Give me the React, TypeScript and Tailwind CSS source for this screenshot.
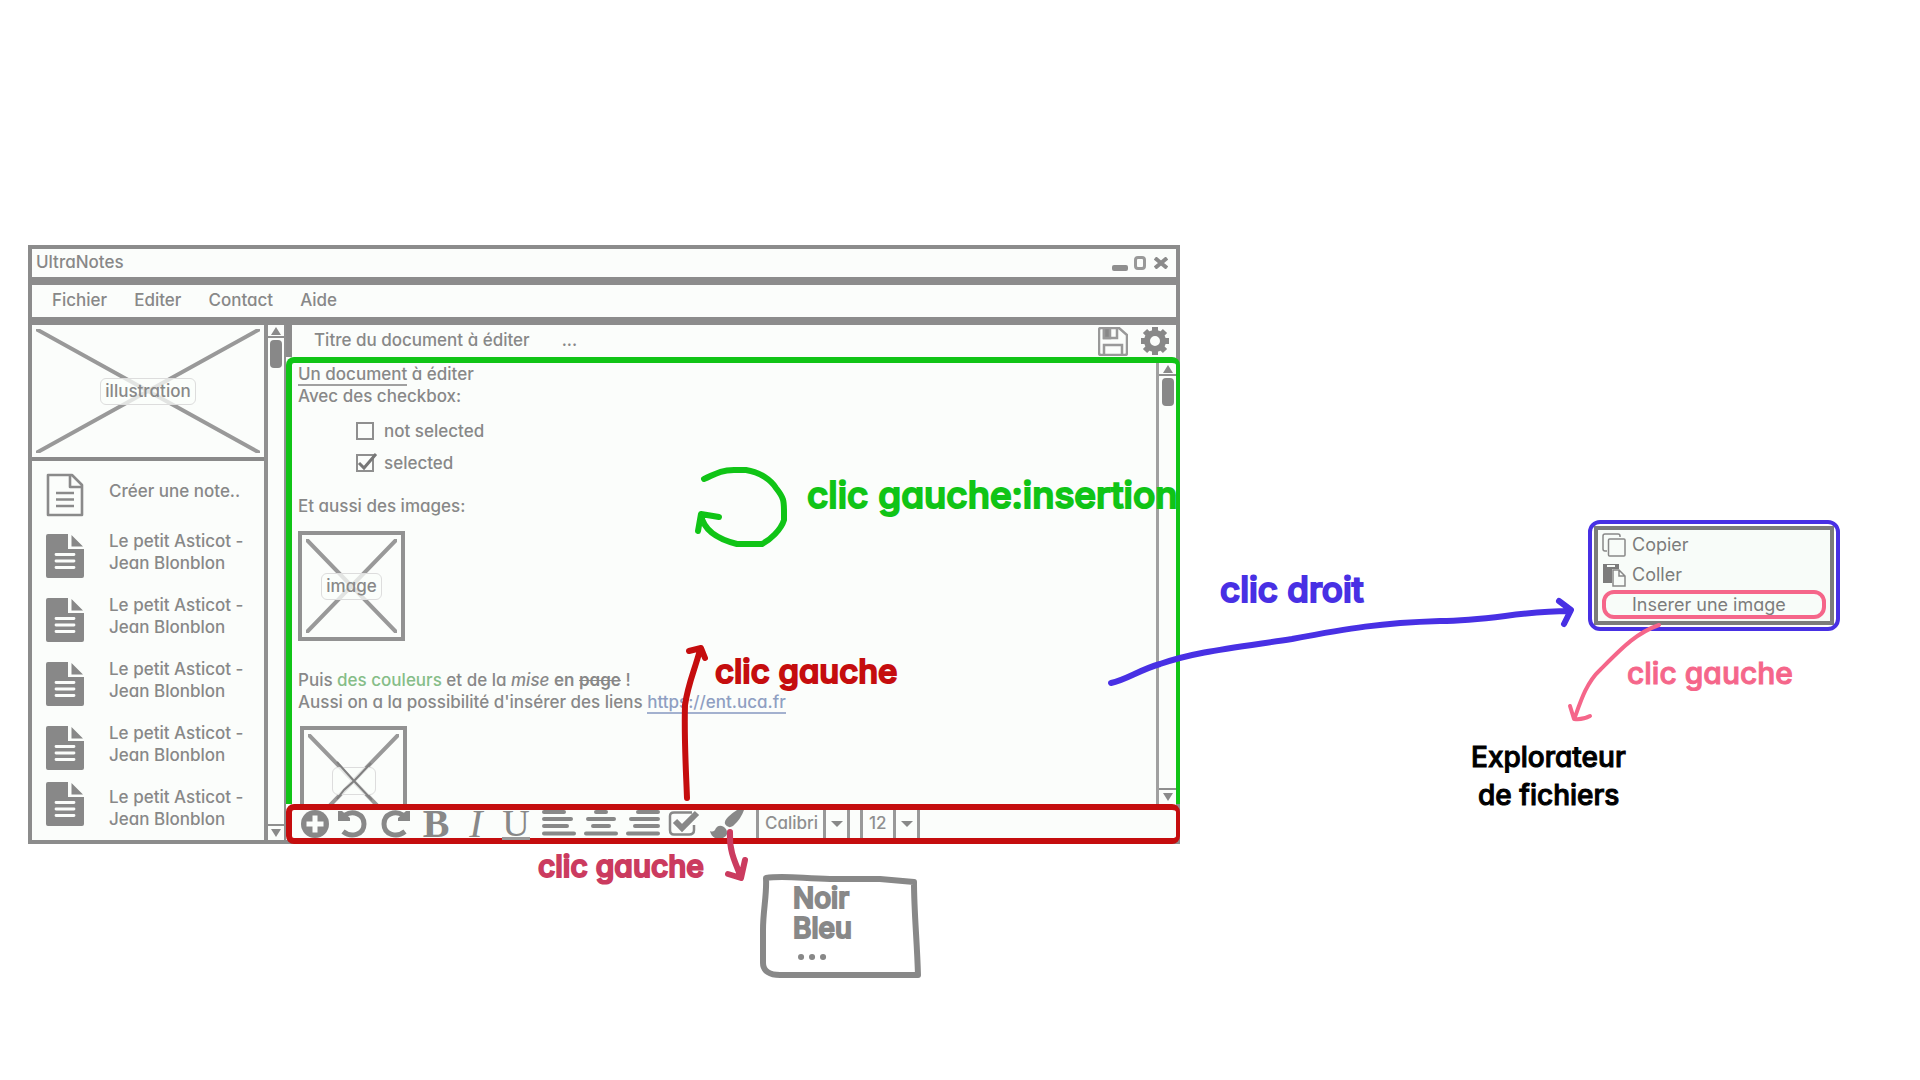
import type { ReactNode } from "react";

const notes = [1, 2, 3, 4, 5];

function Triangle({ down = false }: { down?: boolean }) {
  return (
    <svg viewBox="0 0 12 10" className="h-2.5 w-3" fill="#8a8a8a" aria-hidden="true">
      <path d={down ? "M1 1h10L6 9z" : "M1 9h10L6 1z"} />
    </svg>
  );
}

function ScrollBar({ className }: { className: string }) {
  return (
    <div className={`flex shrink-0 flex-col items-center ${className}`}>
      <button aria-label="Défiler vers le haut" className="flex h-[13px] w-full items-center justify-center border-b-2 border-[#8f8f8f]">
        <Triangle />
      </button>
      <div className="mt-0.5 h-7 w-3 rounded-sm bg-[#888888]" />
      <div className="flex-1" />
      <button aria-label="Défiler vers le bas" className="flex h-4 w-full items-center justify-center border-t-2 border-[#8f8f8f]">
        <Triangle down />
      </button>
    </div>
  );
}

function Placeholder({ label, className }: { label?: string; className: string }) {
  return (
    <div className={`relative flex items-center justify-center ${className}`}>
      <svg className="absolute inset-0 h-full w-full p-1" viewBox="0 0 100 100" preserveAspectRatio="none" aria-hidden="true">
        <path d="M0 0L100 100M100 0L0 100" stroke="#999999" strokeWidth="4" vectorEffect="non-scaling-stroke" />
      </svg>
      {label ? (
        <span className="relative rounded-md border border-[#dddddd] bg-[#fbfdfb]/75 px-1 leading-[25px]">{label}</span>
      ) : (
        <span className="relative flex h-7 w-11 items-center justify-center rounded-md border border-[#dddddd] bg-[#fbfdfb]/75">
          <svg viewBox="0 0 44 44" className="absolute h-11 w-11" fill="none" stroke="#808080" strokeWidth="2" aria-hidden="true">
            <path d="M5 3L22 22L40 41M39 4L22 22L12 31L5 40" />
          </svg>
        </span>
      )}
    </div>
  );
}

function NoteIcon({ outline = false }: { outline?: boolean }) {
  return (
    <svg viewBox="0 0 38 44" className="h-11 w-[38px]" aria-hidden="true">
      {outline ? (
        <g fill="none" stroke="#8a8a8a" strokeWidth="2.6" strokeLinejoin="round">
          <path d="M2 2H26L36 12V42H2zM24 2V14H36" />
          <path d="M10 20H28M10 26.500H28M10 33H28" />
        </g>
      ) : (
        <g>
          <path d="M2 0H22V15H38V42Q38 44 36 44H2Q0 44 0 42V2Q0 0 2 0zM25.500 1L37 12.500H25.500z" fill="#888888" />
          <path d="M10 20.500H28M10 27H28M10 33.500H28" stroke="#fbfdfb" strokeWidth="2.8" strokeLinecap="round" />
        </g>
      )}
    </svg>
  );
}

function ToolButton({ label, className, children }: { label: string; className: string; children: ReactNode }) {
  return (
    <button aria-label={label} className={`flex h-7 shrink-0 items-center justify-center ${className}`}>
      {children}
    </button>
  );
}

function Align({ d }: { d: string }) {
  return (
    <svg viewBox="0 0 34 28" className="h-7 w-[34px]" stroke="#888888" strokeWidth="4" strokeLinecap="round" aria-hidden="true">
      <path d={d} />
    </svg>
  );
}

function Picker({ label, value, className, tail }: { label: string; value: string; className: string; tail: string }) {
  return (
    <label className={`relative flex h-7 shrink-0 border-x-3 border-[#999999] ${className}`}>
      <select aria-label={label} className="w-full appearance-none bg-transparent pl-1.5 text-[#8f8f8f] outline-none">
        <option>{value}</option>
      </select>
      <span className={`pointer-events-none absolute inset-y-0 right-0 flex items-center justify-center border-l-3 border-[#999999] ${tail}`}>
        <svg viewBox="0 0 12 8" className="h-2 w-3" fill="#888888" aria-hidden="true">
          <path d="M0 1H12L6 7z" />
        </svg>
      </span>
    </label>
  );
}

function Sidebar() {
  return (
    <aside className="w-[236px] shrink-0 border-r-4 border-[#909090]">
      <Placeholder label="illustration" className="h-[136px] border-b-4 border-[#8a8a8a]" />
      <ul className="leading-[22px]">
        <li className="flex h-[59px] items-center pl-3.5">
          <span className="mt-2">
            <NoteIcon outline />
          </span>
          <button className="ml-[25px]">Créer une note..</button>
        </li>
        {notes.map((n) => (
          <li key={n} className="flex h-16 items-center pl-3.5">
            <span className={n === 5 ? "mb-2" : "mt-2"}>
              <NoteIcon />
            </span>
            <button className="ml-[25px] text-left">
              Le petit Asticot -
              <br />
              Jean Blonblon
            </button>
          </li>
        ))}
      </ul>
    </aside>
  );
}

function Editor() {
  return (
    <section className="flex flex-1 rounded-t-lg border-x-6 border-t-6 border-r-4 border-[#10c416] bg-[#fbfdfb]">
      <article className="min-w-0 flex-1 pl-1.5 leading-[22px]">
        <p>
          <span className="border-b-2 border-[#a0a0a0]">Un document</span> à éditer
        </p>
        <p>Avec des checkbox:</p>
        <div className="mt-2 pl-[58px]">
          <label className="flex h-8 items-center gap-2.5">
            <input type="checkbox" className="size-[18px] appearance-none border-2 border-[#8f8f8f]" />
            not selected
          </label>
          <label className="relative flex h-8 items-center gap-2.5">
            <input type="checkbox" defaultChecked className="size-[18px] appearance-none border-2 border-[#8f8f8f]" />
            <svg viewBox="0 0 22 20" className="pointer-events-none absolute left-0 h-5 w-[22px]" fill="none" stroke="#777777" strokeWidth="3" aria-hidden="true">
              <path d="M3 10L8 15L20 1" />
            </svg>
            selected
          </label>
        </div>
        <p className="mt-4">Et aussi des images:</p>
        <Placeholder label="image" className="mt-3.5 h-[110px] w-[107px] border-4 border-[#929292]" />
        <p className="mt-7">
          Puis <span className="text-[#86bd88]">des couleurs</span> et de la <em>mise</em> <strong className="font-semibold">en</strong>{" "}
          <s className="font-semibold">page</s> !
        </p>
        <p>
          Aussi on a la possibilité d'insérer des liens{" "}
          <a href="https://ent.uca.fr" className="border-b-2 border-[#a3b1cf] text-[#8f9fc2]">
            https://ent.uca.fr
          </a>
        </p>
        <div className="mt-[13px] ml-0.5 h-[78px] overflow-hidden">
          <Placeholder className="h-[110px] w-[107px] border-4 border-[#929292]" />
        </div>
      </article>
      <ScrollBar className="w-5 border-l-3 border-[#a0a0a0]" />
    </section>
  );
}

function Toolbar() {
  return (
    <div role="toolbar" className="flex h-10 items-center rounded-lg border-6 border-r-4 border-[#c50d0e] bg-[#fbfdfb] pl-2 text-[#888888]">
      <ToolButton label="Ajouter" className="w-[30px]">
        <svg viewBox="0 0 30 28" className="h-7 w-[30px]" aria-hidden="true">
          <circle cx="15" cy="14" r="14" fill="#888888" />
          <path d="M15 5.500V22.500M6.500 14H23.500" stroke="#fbfdfb" strokeWidth="5" />
        </svg>
      </ToolButton>
      <ToolButton label="Annuler" className="ml-2 w-[30px]">
        <svg viewBox="0 0 30 28" className="h-7 w-[30px]" aria-hidden="true">
          <path d="M7 5C15 0 26 4 26 14C26 25 13 28 5 21.500" fill="none" stroke="#888888" strokeWidth="5" />
          <path d="M0 1V11H12V8L4 1z" fill="#888888" />
        </svg>
      </ToolButton>
      <ToolButton label="Rétablir" className="ml-3 w-[30px]">
        <svg viewBox="0 0 30 28" className="h-7 w-[30px]" aria-hidden="true">
          <path d="M23 5C15 0 4 4 4 14C4 25 17 28 25 21.500" fill="none" stroke="#888888" strokeWidth="5" />
          <path d="M30 1V11H18V8L26 1z" fill="#888888" />
        </svg>
      </ToolButton>
      <ToolButton label="Gras" className="ml-3 w-7">
        <span className="font-['Liberation_Serif'] text-[40px] leading-10 font-bold">B</span>
      </ToolButton>
      <ToolButton label="Italique" className="ml-3.5 w-6">
        <span className="font-['Liberation_Serif'] text-[40px] leading-10 italic">I</span>
      </ToolButton>
      <ToolButton label="Souligné" className="ml-3.5 w-7">
        <span className="border-b-3 border-[#999999] font-['Liberation_Serif'] text-[38px] leading-7">U</span>
      </ToolButton>
      <ToolButton label="Aligner à gauche" className="ml-3 w-[34px]">
        <Align d="M2 2H22M2 9H29M2 16H25M2 23.500H32" />
      </ToolButton>
      <ToolButton label="Centrer" className="ml-2 w-[34px]">
        <Align d="M12 2H22M4 9H30M9 16H25M2 23.500H32" />
      </ToolButton>
      <ToolButton label="Aligner à droite" className="ml-2 w-[34px]">
        <Align d="M12 2H32M5 9H32M9 16H32M2 23.500H32" />
      </ToolButton>
      <ToolButton label="Case à cocher" className="ml-2 w-8">
        <svg viewBox="0 0 32 28" className="h-7 w-8" fill="none" stroke="#888888" aria-hidden="true">
          <path d="M24 2.500H6Q2 2.500 2 6V20Q2 24.500 6 24.500H21Q26 24.500 26 20V15" strokeWidth="2.500" />
          <path d="M7 11L14 18L29 3" strokeWidth="6" />
        </svg>
      </ToolButton>
      <ToolButton label="Couleur" className="ml-2.5 w-[34px]">
        <svg viewBox="0 0 34 28" className="h-7 w-[34px]" fill="#888888" aria-hidden="true">
          <path d="M27 0H34Q31 9 23 16Q18 19 15 14Q14 11 18 7Q22 3 27 0z" />
          <path d="M0 21Q4 23 6 18Q9 14 14 17Q19 21 16 26L13 28H5Q1 26 0 21z" />
        </svg>
      </ToolButton>
      <Picker label="Police" value="Calibri" className="ml-3 w-[94px]" tail="w-6" />
      <Picker label="Taille" value="12" className="ml-2.5 w-[60px]" tail="w-6" />
    </div>
  );
}

function AppWindow() {
  return (
    <div className="ml-7 w-3/5 bg-[#fbfdfb]">
      <header className="flex h-9 items-center justify-between border-4 border-[#8c8c8c] pr-2 pl-1">
        <h1>UltraNotes</h1>
        <div className="flex items-center gap-1.5">
          <button aria-label="Réduire" className="mt-2.5 h-1.5 w-4 rounded-xs bg-[#8f8f8f]" />
          <button aria-label="Agrandir" className="h-3.5 w-3 rounded-sm border-3 border-[#999999]" />
          <button aria-label="Fermer" className="ml-0.5">
            <svg viewBox="0 0 14 12" className="h-3 w-3.5" stroke="#8a8a8a" strokeWidth="4" aria-hidden="true">
              <path d="M1 1L13 11M13 1L1 11" />
            </svg>
          </button>
        </div>
      </header>
      <nav className="flex h-10 items-center gap-[27px] border-4 border-[#8c8c8c] pl-5">
        <button>Fichier</button>
        <button>Editer</button>
        <button>Contact</button>
        <button>Aide</button>
      </nav>
      <div className="flex border-4 border-[#8c8c8c]">
        <Sidebar />
        <ScrollBar className="w-[18px] border-r-2 border-[#909090]" />
        <main className="-mr-1 -mb-1 flex min-w-0 flex-1 flex-col">
          <div className="flex h-8 items-center border-r-4 border-l-6 border-[#8c8c8c] pr-1.5 pl-[22px]">
            <h2>Titre du document à éditer</h2>
            <span className="ml-8">...</span>
            <button aria-label="Enregistrer" className="ml-auto">
              <svg viewBox="0 0 30 29" className="h-[29px] w-[30px]" fill="none" stroke="#999999" strokeWidth="2.500" aria-hidden="true">
                <path d="M3 1H21L29 8V26Q29 28 27 28H3Q1 28 1 26V3Q1 1 3 1z" />
                <path d="M6 28V18H24V28M6 1V11H19V1" />
                <path d="M6 1H12V11H6z" fill="#888888" />
              </svg>
            </button>
            <button aria-label="Paramètres" className="ml-3">
              <svg viewBox="-15 -15 30 30" className="size-[30px]" aria-hidden="true">
                <circle r="8" fill="none" stroke="#888888" strokeWidth="6" />
                <path d="M0-14V-9M0 14V9M-14 0H-9M14 0H9M-10-10L-7-7M10 10L7 7M10-10L7-7M-10 10L-7 7" stroke="#888888" strokeWidth="6" />
              </svg>
            </button>
          </div>
          <Editor />
          <Toolbar />
        </main>
      </div>
    </div>
  );
}

function ContextMenu() {
  return (
    <div className="absolute top-[520px] left-[1588px] rounded-xl border-4 border-[#4830e4] bg-white p-0.5 text-lg font-normal text-[#7c7c7c]">
      <ul className="w-60 border-4 border-[#7c7c7c] bg-[#f8fcf9]">
        <li className="pl-1">
          <button className="flex h-[30px] items-center gap-1.5">
            <svg viewBox="0 0 24 24" className="size-6" fill="none" stroke="#888888" strokeWidth="1.500" aria-hidden="true">
              <path d="M5 18H3Q1 18 1 16V3Q1 1 3 1H16Q18 1 18 3V4" />
              <rect x="6.500" y="6" width="16.500" height="17" rx="1" />
            </svg>
            Copier
          </button>
        </li>
        <li className="pl-1">
          <button className="flex h-[30px] items-center gap-1.5">
            <svg viewBox="0 0 24 24" className="size-6" aria-hidden="true">
              <path d="M1 1H17V6H10V20H1z" fill="#7c7c7c" />
              <path d="M5 3H13" stroke="#f8fcf9" strokeWidth="2" />
              <path d="M11 7H17L23 13V23H11zM17 7V13H23" fill="#f8fcf9" stroke="#888888" strokeWidth="1.500" />
            </svg>
            Coller
          </button>
        </li>
        <li className="px-1 pb-0.5">
          <button className="block h-[29px] w-full rounded-xl border-4 border-[#f5668a] pl-[26px] text-left leading-5">Inserer une image</button>
        </li>
      </ul>
    </div>
  );
}

function Annotations() {
  return (
    <div className="pointer-events-none absolute inset-0 leading-none whitespace-nowrap">
      <svg className="absolute top-0 left-0 h-[1080px] w-[1920px]" viewBox="0 0 1920 1080" fill="none" strokeLinecap="round" strokeLinejoin="round" aria-hidden="true">
        <path d="M704 479C714 475 719 470 734 470H746C760 472 771 480 776 488C784 498 784 501 784 512V520C781 530 770 540 762 544H737C721 540 704 532 701 515M698 531L701 514L719 517" stroke="#10c416" strokeWidth="6" />
        <path d="M687 798C686 770 684 740 685 705C688 684 694 672 700 650M689 651L701 648L705 658" stroke="#c50d0e" strokeWidth="6" />
        <path d="M730 832C729 848 733 858 741 877M728 874L741 878L745 860" stroke="#cb3b5f" strokeWidth="6" />
        <path d="M1111 683C1126 680 1139 670 1160 664C1195 652 1225 649 1292 639C1350 628 1380 623 1440 621C1490 621 1520 611 1569 611M1559 601L1571 610L1564 624" stroke="#4830e4" strokeWidth="6" />
        <path d="M1659 625C1636 633 1622 648 1600 670C1587 682 1581 700 1575 717M1570 706L1574 719Q1583 720 1590 716" stroke="#f5668a" strokeWidth="4" />
        <path d="M766 878C785 875 805 879 830 879H880L914 882C914 912 917 940 918 975H780C770 975 763 971 763 963V930C763 910 767 895 766 878z" stroke="#888888" strokeWidth="6" />
        <path d="M801 957h.1M812 957h.1M823 957h.1" stroke="#888888" strokeWidth="6" />
      </svg>
      <p className="absolute top-[476px] left-[807px] text-[37px] text-[#10c416] [-webkit-text-stroke:2px_#10c416]">clic gauche:insertion</p>
      <p className="absolute top-[655px] left-[715px] text-[33px] text-[#c50d0e] [-webkit-text-stroke:2px_#c50d0e]">clic gauche</p>
      <p className="absolute top-[848px] left-[538px] text-3xl text-[#cb3b5f] [-webkit-text-stroke:2px_#cb3b5f]">clic gauche</p>
      <p className="absolute top-[572px] left-[1220px] text-[35px] text-[#4830e4] [-webkit-text-stroke:2px_#4830e4]">clic droit</p>
      <p className="absolute top-[655px] left-[1627px] text-3xl text-[#f5668a] [-webkit-text-stroke:1px_#f5668a]">clic gauche</p>
      <p className="absolute top-[743px] left-[1471px] text-[28px] text-black [-webkit-text-stroke:1px_black]">Explorateur</p>
      <p className="absolute top-[781px] left-[1478px] text-[28px] text-black [-webkit-text-stroke:1px_black]">de fichiers</p>
      <p className="absolute top-[884px] left-[793px] text-[28px] text-[#888888] [-webkit-text-stroke:2px_#888888]">Noir</p>
      <p className="absolute top-[914px] left-[793px] text-[28px] text-[#888888] [-webkit-text-stroke:2px_#888888]">Bleu</p>
    </div>
  );
}

export default function App() {
  return (
    <div className="relative min-h-screen overflow-hidden bg-white pt-[245px] font-['Inter','Liberation_Sans',sans-serif] text-[17px] font-medium text-[#888888] [font-feature-settings:'cv11']">
      <AppWindow />
      <ContextMenu />
      <Annotations />
    </div>
  );
}
